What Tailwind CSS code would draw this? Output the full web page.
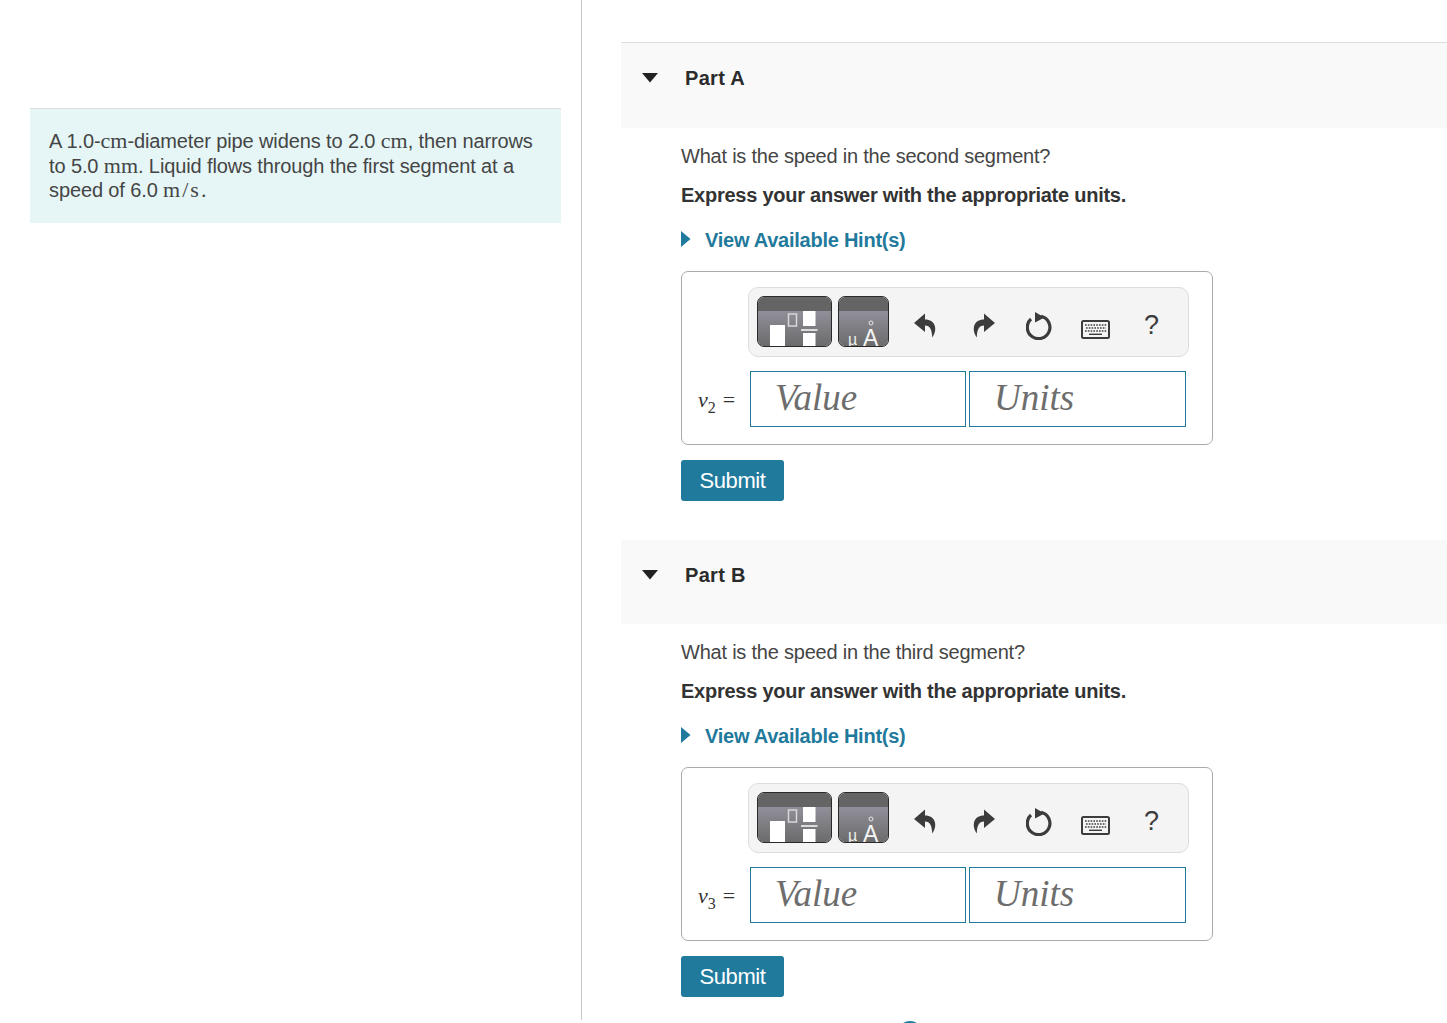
<!DOCTYPE html>
<html lang="en">
<head>
  <meta charset="UTF-8">
  <title>Part A / Part B</title>
  <script src="https://cdn.jsdelivr.net/npm/@tailwindcss/browser@4"></script>
</head>
<body class="bg-white text-[#454545] font-['Liberation_Sans',Arial,sans-serif]">
  <svg class="absolute w-0 h-0">
    <defs>
      <linearGradient id="body" x1="0" y1="0" x2="0" y2="1"><stop offset="0" stop-color="#918f99"/><stop offset="1" stop-color="#6b6b6b"/></linearGradient>
    </defs>
    <symbol id="undo" viewBox="0 0 22 26"><path fill="#3c3c3c" d="M11 0.5 L0 10 L11 19 V12.5 C15 12.5 18 15 18.2 24.5 C20.800 21 21.800 17 21 13.500 C20 9 16 6.500 11 6.500 Z"/></symbol>
    <symbol id="redo" viewBox="0 0 22 26"><path fill="#3c3c3c" d="M11 0.5 L22 10 L11 19 V12.5 C7 12.5 4 15 3.800 24.5 C1.200 21 0.200 17 1 13.500 C2 9 6 6.500 11 6.500 Z"/></symbol>
    <symbol id="reset" viewBox="0 0 26 28"><path fill="none" stroke="#3c3c3c" stroke-width="3.200" d="M5 7 A11.300 11.300 0 1 0 15 4.300"/><path fill="#3c3c3c" d="M9 0 L18.500 5.500 L9 10.500 Z"/></symbol>
    <symbol id="keyboard" viewBox="0 0 29 19">
      <rect x="1" y="1" width="27" height="17" rx="1.500" fill="#f4f4f4" stroke="#3c3c3c" stroke-width="2"/>
      <path stroke="#3c3c3c" stroke-width="1.400" stroke-dasharray="1.600 1.200" d="M4 5 H25.500 M5 8 H25 M4 11 H25.500"/>
      <path stroke="#3c3c3c" stroke-width="1.400" d="M8 14.300 H21"/>
    </symbol>
    <symbol id="templates" viewBox="0 0 75 51">
      <path fill="url(#body)" d="M1 15 H74 V44 A6 6 0 0 1 68 50 H7 A6 6 0 0 1 1 44 Z"/>
      <path fill="#646464" d="M1 15 V7 A6 6 0 0 1 7 1 H68 A6 6 0 0 1 74 7 V15 Z"/>
      <rect x="13" y="29" width="15" height="21" fill="#fff"/>
      <rect x="31.500" y="18" width="8" height="12" fill="none" stroke="#d8d8d8" stroke-width="1.500"/>
      <rect x="46" y="15" width="12.500" height="15" fill="#fff"/>
      <rect x="44" y="33" width="16.500" height="2" fill="#dcdcdc"/>
      <rect x="46" y="37" width="12.500" height="13" fill="#fff"/>
      <rect x="0.500" y="0.500" width="74" height="50" rx="6.500" fill="none" stroke="#2a2a2a"/>
    </symbol>
    <symbol id="symbols" viewBox="0 0 51 51">
      <path fill="url(#body)" d="M1 15 H50 V44 A6 6 0 0 1 44 50 H7 A6 6 0 0 1 1 44 Z"/>
      <path fill="#646464" d="M1 15 V7 A6 6 0 0 1 7 1 H44 A6 6 0 0 1 50 7 V15 Z"/>
      <circle cx="33" cy="27" r="2" fill="none" stroke="#e8e8e8"/>
      <text x="10" y="49" font-family="Liberation Sans" font-size="16" fill="#eeeeee">µ</text>
      <text x="25" y="50" font-family="Liberation Sans" font-size="23" fill="#f4f4f4">A</text>
      <rect x="0.500" y="0.500" width="50" height="50" rx="6.500" fill="none" stroke="#2a2a2a"/>
    </symbol>
  </svg>

  <div class="flex h-[1023px] w-[1447px] overflow-hidden relative">
    <!-- problem statement -->
    <div class="w-[582px] h-[1020px] shrink-0 border-r border-[#c8c8c8] pt-[108px] pl-[30px]">
      <div class="w-[531px] h-[115px] bg-[#e6f6f7] border-t border-[#dddddd] pt-[20px] pl-[19px] text-[20px] leading-[24.5px] tracking-[-0.12px]">
        A 1.0-<span class="font-['Liberation_Serif',serif] text-[22px] leading-[20px] tracking-normal">cm</span>-diameter pipe widens to 2.0 <span class="font-['Liberation_Serif',serif] text-[22px] leading-[20px] tracking-normal">cm</span>, then narrows<br>
        to 5.0 <span class="font-['Liberation_Serif',serif] text-[22px] leading-[20px] tracking-normal">mm</span>. Liquid flows through the first segment at a<br>
        speed of 6.0 <span class="font-['Liberation_Serif',serif] text-[22px] leading-[20px] tracking-[2px]">m/s.</span>
      </div>
    </div>

    <div class="flex-1 pt-[42px] pl-[39px]">
      <!-- Part A -->
      <section class="h-[498px]">
        <div class="h-[86px] bg-[#f9f9f9] border-t border-[#dddddd] flex items-start pl-[21px] pt-[23px]">
          <svg class="w-[16px] h-[10px] mt-[7px] shrink-0" viewBox="0 0 16 10"><path fill="#222" d="M0 0 H16 L8 9.500 Z"/></svg>
          <h2 class="ml-[27px] text-[20px] leading-[24px] font-bold text-[#2b2b2b] tracking-[0.3px]">Part A</h2>
        </div>
        <div class="pl-[60px]">
          <p class="mt-[16px] text-[20px] leading-[24px] tracking-[-0.22px]">What is the speed in the second segment?</p>
          <p class="mt-[15px] text-[20px] leading-[24px] font-bold text-[#333] tracking-[-0.25px]">Express your answer with the appropriate units.</p>
          <a class="mt-[21px] flex items-center text-[20px] leading-[24px] font-bold text-[#1f7a9c] tracking-[-0.25px]">
            <svg class="w-[10px] h-[16px] mr-[14px] mb-[3px]" viewBox="0 0 10 16"><path fill="#1f7a9c" d="M0 0 L9.500 8 L0 16 Z"/></svg>View Available Hint(s)
          </a>
          <div class="mt-[19px] w-[532px] h-[174px] border border-[#aaaaaa] rounded-[7px] pt-[15px] pl-[66px]">
            <div class="w-[441px] h-[70px] bg-[#f4f4f4] border border-[#dddddd] rounded-[10px] flex items-start pl-[8px] pt-[8px]">
              <svg class="w-[75px] h-[51px] shrink-0"><use href="#templates"/></svg>
              <svg class="w-[51px] h-[51px] ml-[6px] shrink-0"><use href="#symbols"/></svg>
              <svg class="w-[22px] h-[26px] ml-[25px] mt-[17px] shrink-0"><use href="#undo"/></svg>
              <svg class="w-[22px] h-[26px] ml-[37px] mt-[17px] shrink-0"><use href="#redo"/></svg>
              <svg class="w-[26px] h-[28px] ml-[31px] mt-[16px] shrink-0"><use href="#reset"/></svg>
              <svg class="w-[29px] h-[19px] ml-[29px] mt-[24px] shrink-0"><use href="#keyboard"/></svg>
              <span class="ml-[34px] mt-[14px] text-[27px] leading-[30px] text-[#3c3c3c]">?</span>
            </div>
            <div class="flex items-center mt-[14px] -ml-[66px]">
              <span class="w-[68px] pl-[16px] text-[22px] font-['Liberation_Serif',serif] text-[#333] whitespace-nowrap"><i>v</i><sub class="text-[16px] align-[-2px]">2</sub><span class="ml-[7px] text-[22px]">=</span></span>
              <div class="w-[216px] h-[56px] border border-[#1f7a9c] pl-[24px] font-['Liberation_Serif',serif] italic text-[37px] leading-[51px] text-[#6d6d6d]">Value</div>
              <div class="w-[217px] h-[56px] ml-[3px] border border-[#1f7a9c] pl-[24px] font-['Liberation_Serif',serif] italic text-[37px] leading-[51px] text-[#6d6d6d]">Units</div>
            </div>
          </div>
          <button class="block mt-[15px] w-[103px] h-[41px] bg-[#1f7a9c] rounded-[3px] text-white text-[22px] tracking-[-0.4px]">Submit</button>
        </div>
      </section>

      <!-- Part B -->
      <section>
        <div class="h-[84px] bg-[#f9f9f9] flex items-start pl-[21px] pt-[23px]">
          <svg class="w-[16px] h-[10px] mt-[7px] shrink-0" viewBox="0 0 16 10"><path fill="#222" d="M0 0 H16 L8 9.500 Z"/></svg>
          <h2 class="ml-[27px] text-[20px] leading-[24px] font-bold text-[#2b2b2b] tracking-[0.3px]">Part B</h2>
        </div>
        <div class="pl-[60px]">
          <p class="mt-[16px] text-[20px] leading-[24px] tracking-[-0.22px]">What is the speed in the third segment?</p>
          <p class="mt-[15px] text-[20px] leading-[24px] font-bold text-[#333] tracking-[-0.25px]">Express your answer with the appropriate units.</p>
          <a class="mt-[21px] flex items-center text-[20px] leading-[24px] font-bold text-[#1f7a9c] tracking-[-0.25px]">
            <svg class="w-[10px] h-[16px] mr-[14px] mb-[3px]" viewBox="0 0 10 16"><path fill="#1f7a9c" d="M0 0 L9.500 8 L0 16 Z"/></svg>View Available Hint(s)
          </a>
          <div class="mt-[19px] w-[532px] h-[174px] border border-[#aaaaaa] rounded-[7px] pt-[15px] pl-[66px]">
            <div class="w-[441px] h-[70px] bg-[#f4f4f4] border border-[#dddddd] rounded-[10px] flex items-start pl-[8px] pt-[8px]">
              <svg class="w-[75px] h-[51px] shrink-0"><use href="#templates"/></svg>
              <svg class="w-[51px] h-[51px] ml-[6px] shrink-0"><use href="#symbols"/></svg>
              <svg class="w-[22px] h-[26px] ml-[25px] mt-[17px] shrink-0"><use href="#undo"/></svg>
              <svg class="w-[22px] h-[26px] ml-[37px] mt-[17px] shrink-0"><use href="#redo"/></svg>
              <svg class="w-[26px] h-[28px] ml-[31px] mt-[16px] shrink-0"><use href="#reset"/></svg>
              <svg class="w-[29px] h-[19px] ml-[29px] mt-[24px] shrink-0"><use href="#keyboard"/></svg>
              <span class="ml-[34px] mt-[14px] text-[27px] leading-[30px] text-[#3c3c3c]">?</span>
            </div>
            <div class="flex items-center mt-[14px] -ml-[66px]">
              <span class="w-[68px] pl-[16px] text-[22px] font-['Liberation_Serif',serif] text-[#333] whitespace-nowrap"><i>v</i><sub class="text-[16px] align-[-2px]">3</sub><span class="ml-[7px] text-[22px]">=</span></span>
              <div class="w-[216px] h-[56px] border border-[#1f7a9c] pl-[24px] font-['Liberation_Serif',serif] italic text-[37px] leading-[51px] text-[#6d6d6d]">Value</div>
              <div class="w-[217px] h-[56px] ml-[3px] border border-[#1f7a9c] pl-[24px] font-['Liberation_Serif',serif] italic text-[37px] leading-[51px] text-[#6d6d6d]">Units</div>
            </div>
          </div>
          <button class="block mt-[15px] w-[103px] h-[41px] bg-[#1f7a9c] rounded-[3px] text-white text-[22px] tracking-[-0.4px]">Submit</button>
        </div>
      </section>
    </div>

    <!-- top of the next control, cut off by the window -->
    <div class="absolute left-[897px] top-[1021px] w-[26px] h-[26px] rounded-full bg-[#1f7a9c]"></div>
  </div>
</body>
</html>
